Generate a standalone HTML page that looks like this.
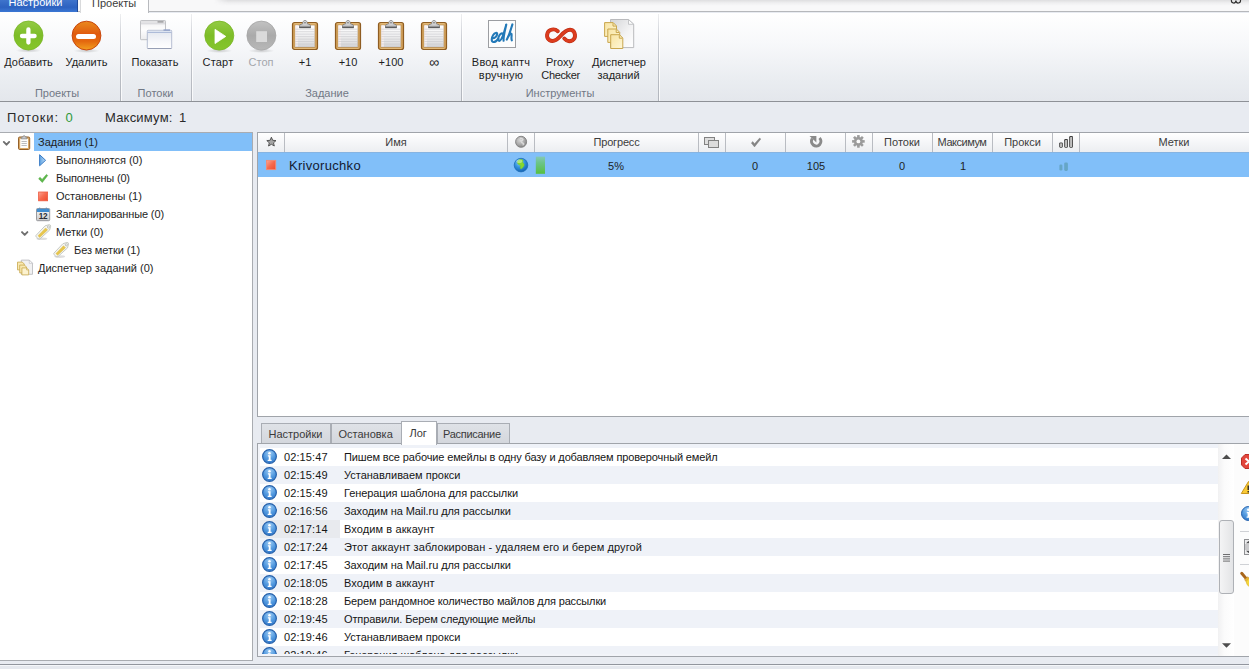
<!DOCTYPE html>
<html lang="ru">
<head>
<meta charset="utf-8">
<title>Проекты</title>
<style>
*{box-sizing:border-box;margin:0;padding:0}
html,body{width:1249px;height:669px;overflow:hidden}
body{position:relative;background:#e8ebf1;font-family:"Liberation Sans",sans-serif;font-size:11px;color:#161616;line-height:1}
.abs{position:absolute}
.t{position:absolute;white-space:nowrap;line-height:14px;height:14px}
.c{text-align:center}
svg{position:absolute;overflow:visible}
/* top strip */
#topstrip{left:0;top:0;width:1249px;height:12px;background:#f8f8f9;border-bottom:1px solid #b6b8bc}
#topshadow{left:214px;top:0;width:1035px;height:6px;background:linear-gradient(rgba(120,120,125,.20),rgba(150,150,155,.08) 50%,rgba(200,200,200,0));-webkit-mask-image:linear-gradient(90deg,transparent,#000 14px);mask-image:linear-gradient(90deg,transparent,#000 14px)}
#tab1{left:0;top:0;width:78px;height:12px;background:linear-gradient(#3f74cc,#2d62c0 60%,#3b77d4);border-right:1px solid #1f4a9a}
#tab2{left:80px;top:0;width:69px;height:13px;background:#fff;border-left:1px solid #d9dadc;border-right:1px solid #b8babe}
/* ribbon */
#ribbon{left:0;top:13px;width:1249px;height:89px;background:linear-gradient(#ffffff 0%,#f7f8fa 35%,#eaedf1 75%,#e4e7ec 100%);border-bottom:1px solid #8e9197}
.gsep{position:absolute;top:14px;width:1px;height:87px;background:linear-gradient(rgba(200,203,209,0.3),#c9ccd2 30%,#b1b5bc);box-shadow:1px 0 0 rgba(255,255,255,.75)}
/* status */
#status{left:0;top:102px;width:1249px;height:30px;background:#e8ebf1}
.st{font-size:13px;line-height:16px;height:16px;color:#2a2a2a}
/* left panel */
#left{left:0;top:132px;width:253px;height:529px;background:#fff;border-top:1px solid #a9acb1;border-right:1px solid #a9acb1;border-bottom:1px solid #a9acb1}
#sel{left:34px;top:133px;width:218px;height:18px;background:#81bff9}
/* table */
#table{left:257px;top:132px;width:992px;height:285px;background:#fff;border:1px solid #a0a4aa;border-right:none}
#thead{left:258px;top:133px;width:991px;height:19px;background:linear-gradient(#ffffff,#f5f6f8 50%,#eceef1)}
.csep{position:absolute;top:133px;width:1px;height:19px;background:#b9bcc2}
#trow{left:258px;top:152px;width:991px;height:25px;background:#81bff9;border-top:1px solid #86b4e2}
.r13{font-size:13px;line-height:16px;height:16px}
/* tabs */
.tab{position:absolute;top:423px;height:21px;background:linear-gradient(#dfe2e7,#d3d6dc);border:1px solid #a9adb4;border-bottom:none}
.tab.act{top:421px;height:24px;background:#fff;z-index:3}
/* log */
#log{left:257px;top:443px;width:992px;height:214px;background:#f2f4f9;border:1px solid #a0a4aa;border-right:none}
#sbar{left:1218px;top:444px;width:16px;height:212px;background:linear-gradient(90deg,#f1f1f2,#fbfbfb 40%,#ffffff)}
#thumb{left:1219px;top:520px;width:15px;height:74px;border:1px solid #aeb1b6;border-radius:3px;background:linear-gradient(90deg,#f4f4f5,#e3e4e6)}
#rtool{left:1234px;top:444px;width:15px;height:212px;background:#fcfcfc}
#bottomline{left:0;top:664px;width:1249px;height:1px;background:#92969e}
#bottombar{left:0;top:665px;width:1249px;height:4px;background:#e5e8ee;border-top:1px solid #f5f7fa}
</style>
</head>
<body>
<svg width="0" height="0" style="position:absolute"><defs>
<radialGradient id="gInfo" cx="50%" cy="25%" r="80%"><stop offset="0" stop-color="#9ccaf3"/><stop offset="0.55" stop-color="#5199df"/><stop offset="1" stop-color="#2f74c6"/></radialGradient>
<g id="info"><circle cx="7" cy="7" r="6.400" fill="url(#gInfo)" stroke="#2460ab" stroke-width="1.100"/><circle cx="7" cy="3.900" r="1.150" fill="#fff"/><path d="M5.500 5.900h2.500v4.100h1v1.100H5.300v-1.100h1v-3H5.500z" fill="#fff"/></g>
</defs></svg>
<!-- TOP STRIP -->
<div class="abs" id="topstrip"></div>
<div class="abs" id="topshadow"></div>
<div class="abs" style="left:0;top:12px;width:81px;height:1px;background:#fdfdfe"></div>
<div class="abs" id="tab1"></div>
<div class="abs" id="tab2"></div>
<div class="t" style="left:8.500px;top:-5px;color:#fff;width:54px">Настройки</div>
<div class="t" style="left:92px;top:-4px;color:#3c3c3c">Проекты</div>

<svg style="left:1229px;top:0" width="14" height="5" viewBox="0 0 14 5"><path d="M2.300 0 C2.300 4 6.600 4 6.900 0.600 C7.300 4 11.600 4 11.600 0" fill="none" stroke="#2d2d2d" stroke-width="1.100"/></svg>
<!-- RIBBON -->
<div class="abs" id="ribbon"></div>
<div class="gsep" style="left:120px"></div>
<div class="gsep" style="left:191px"></div>
<div class="gsep" style="left:461px"></div>
<div class="gsep" style="left:658px"></div>
<svg id="ribicons" style="left:0;top:0" width="1249" height="110" viewBox="0 0 1249 110">
<defs>
<linearGradient id="gGreen" x1="0" y1="0" x2="0" y2="1"><stop offset="0" stop-color="#93cb45"/><stop offset="0.5" stop-color="#7dbd27"/><stop offset="1" stop-color="#86c62c"/></linearGradient>
<linearGradient id="gRed" x1="0" y1="0" x2="0" y2="1"><stop offset="0" stop-color="#ea8a1e"/><stop offset="0.45" stop-color="#e05a0e"/><stop offset="0.7" stop-color="#e4680f"/><stop offset="1" stop-color="#f3a11f"/></linearGradient>
<linearGradient id="gGray" x1="0" y1="0" x2="0" y2="1"><stop offset="0" stop-color="#c2c2c2"/><stop offset="0.5" stop-color="#aaaaaa"/><stop offset="1" stop-color="#b8b8b8"/></linearGradient>
<radialGradient id="gShadow" cx="50%" cy="50%" r="50%"><stop offset="0" stop-color="#000" stop-opacity="0.18"/><stop offset="1" stop-color="#000" stop-opacity="0"/></radialGradient>
<linearGradient id="gPaper" x1="0" y1="0" x2="0" y2="1"><stop offset="0" stop-color="#ffffff"/><stop offset="0.4" stop-color="#f3f3f4"/><stop offset="1" stop-color="#d6d6d8"/></linearGradient>
<linearGradient id="gBoard" x1="0" y1="0" x2="1" y2="0"><stop offset="0" stop-color="#c8934a"/><stop offset="0.12" stop-color="#e2b876"/><stop offset="0.88" stop-color="#e2b876"/><stop offset="1" stop-color="#c8934a"/></linearGradient>
<linearGradient id="gClip" x1="0" y1="0" x2="0" y2="1"><stop offset="0" stop-color="#ececec"/><stop offset="1" stop-color="#b4b4b6"/></linearGradient>
<linearGradient id="gWinB" x1="0" y1="0" x2="0" y2="1"><stop offset="0" stop-color="#f1f1f2"/><stop offset="0.5" stop-color="#fdfdfd"/><stop offset="1" stop-color="#ececee"/></linearGradient>
<linearGradient id="gWinF" x1="0" y1="0" x2="0" y2="1"><stop offset="0" stop-color="#e2e6ee"/><stop offset="0.6" stop-color="#f6f7fa"/><stop offset="1" stop-color="#ffffff"/></linearGradient>
<linearGradient id="gDocG" x1="0" y1="0" x2="1" y2="1"><stop offset="0" stop-color="#d4d5d7"/><stop offset="0.6" stop-color="#f4f4f5"/><stop offset="1" stop-color="#ffffff"/></linearGradient>
<linearGradient id="gDocY" x1="0" y1="0" x2="1" y2="1"><stop offset="0" stop-color="#f8e4a4"/><stop offset="0.5" stop-color="#fbedbb"/><stop offset="1" stop-color="#fef7d8"/></linearGradient>
<g id="clipb">
 <rect x="0.5" y="2.5" width="25" height="27" rx="2" fill="url(#gBoard)" stroke="#8f5d22" stroke-width="1.2"/>
 <rect x="3" y="5" width="20" height="22.3" fill="url(#gPaper)" stroke="#a87a3c" stroke-width="0.6"/>
 <rect x="3.3" y="5.3" width="2.6" height="21.7" fill="#f7eeee" opacity="0.9"/>
 <path d="M3.300 9.200h19.400M3.300 11.700h19.400M3.300 14.100h19.400M3.300 16.600h19.400M3.300 19.100h19.400M3.300 21.500h19.400M3.300 24.000h19.400M3.300 26.300h19.400" stroke="#c4c4c8" stroke-width="0.550" fill="none"/>
 <path d="M7.5 7.6 L7.500 5.8 Q7.6 4.6 9 4.300 L10.600 3.800 Q10.800 0.400 13 0.300 Q15.200 0.400 15.400 3.800 L17 4.300 Q18.400 4.600 18.500 5.800 L18.500 7.600 Z" fill="url(#gClip)" stroke="#6e6e70" stroke-width="0.7"/>
 <rect x="7.300" y="6.600" width="11.400" height="1.500" fill="#5c5c5e"/>
 <ellipse cx="13" cy="2.700" rx="1.600" ry="1.200" fill="#8a8a8c" stroke="#f4f4f4" stroke-width="0.500"/>
</g>
</defs>
<!-- add -->
<ellipse cx="28.5" cy="50.5" rx="13" ry="2.2" fill="url(#gShadow)"/>
<circle cx="28.5" cy="35.5" r="14.5" fill="url(#gGreen)" stroke="#78b526" stroke-width="0.8"/>
<path d="M22 36h12.600M28.400 29.500v13.100" stroke="#fff" stroke-width="4.300" stroke-linecap="round"/>
<!-- delete -->
<ellipse cx="86.5" cy="50.8" rx="13" ry="2.2" fill="url(#gShadow)"/>
<circle cx="86.500" cy="35.600" r="14.400" fill="url(#gRed)" stroke="#c9470e" stroke-width="1"/>
<path d="M78.500 36.600h15" stroke="#fff" stroke-width="5" stroke-linecap="round"/>
<!-- show windows -->
<rect x="140.500" y="20.500" width="25" height="19.200" rx="0.800" fill="url(#gWinB)" stroke="#b3b4b8" stroke-width="0.800"/>
<rect x="141" y="21" width="24" height="2.600" fill="#e3e3e5"/>
<path d="M141 23.900h24" stroke="#c6c6c9" stroke-width="0.600"/>
<rect x="157.500" y="21.300" width="6" height="1.200" fill="#8f8f92"/>
<rect x="147.300" y="30.300" width="24.400" height="18.200" rx="0.800" fill="url(#gWinF)" stroke="#a5aec6" stroke-width="0.800"/>
<rect x="147.700" y="30.700" width="23.600" height="1.500" fill="#dde4f1"/>
<path d="M147.700 32.500h23.600" stroke="#9fb0d3" stroke-width="0.800"/>
<path d="M147.600 48.500h23.800" stroke="#8f97ad" stroke-width="0.800"/>
<rect x="163.500" y="29.400" width="6.500" height="1.400" fill="#8fa0c8"/>
<!-- start -->
<ellipse cx="219.300" cy="50.800" rx="13" ry="2.200" fill="url(#gShadow)"/>
<circle cx="219.300" cy="35.600" r="14.500" fill="url(#gGreen)" stroke="#78b526" stroke-width="0.800"/>
<path d="M215 29.300 L225.800 36.400 L215 43.600 Z" fill="#fff" stroke="#fff" stroke-width="0.800" stroke-linejoin="round"/>
<!-- stop -->
<ellipse cx="261.400" cy="50.800" rx="13" ry="2.200" fill="url(#gShadow)"/>
<circle cx="261.400" cy="35.600" r="14.500" fill="url(#gGray)" stroke="#a6a6a6" stroke-width="0.800"/>
<rect x="256.200" y="31.200" width="10.800" height="10.800" fill="#dadada"/>
<!-- clipboards -->
<use href="#clipb" x="292" y="20"/>
<use href="#clipb" x="335" y="20"/>
<use href="#clipb" x="378" y="20"/>
<use href="#clipb" x="421" y="20"/>
<!-- captcha -->
<rect x="488.500" y="20.500" width="27" height="27" fill="#fdfdfd" stroke="#9c9ea2" stroke-width="1"/>
<g fill="none" stroke="#2379b8" stroke-width="2.100" stroke-linecap="round" stroke-linejoin="round">
<path d="M492.600 38.200 C494.500 38.400 497.300 36 497.200 33.800 C497.100 32.300 494.800 32.600 493.200 35 C491.500 37.600 491 41.600 493.200 42 C495 42.300 497 40.500 498.300 38.600"/>
<path d="M503 34 C501.800 32.600 499.600 34.200 498.600 37 C497.800 39.400 498.400 41.200 499.800 40.800 C501.600 40.200 503.400 35.500 506.300 24.600 C504.800 31 503.200 37 503.600 40.800"/>
<path d="M512.400 24.400 C510.800 30 508.600 36 506.800 39.600 C508.600 35.200 510.400 33 511.400 33.800 C512.200 34.600 510.800 38 511.800 40.400"/>
</g>
<!-- proxy infinity -->
<path d="M557.800 31.200 C556 29.600 553 29 550.500 30 C546.300 31.700 545.900 38.200 549.600 40.200 C553.200 42.100 557 40 560.500 36 C563.600 32.400 567 28.900 571.200 29.900 C575.700 31.100 576.200 38.200 572.600 40.200 C569.400 42 566.200 40.800 564.300 38.600" fill="none" stroke="#bb2e15" stroke-width="3.900" stroke-linecap="round" stroke-linejoin="round"/>
<path d="M557.800 31.200 C556 29.600 553 29 550.500 30 C546.300 31.700 545.900 38.200 549.600 40.200 C553.200 42.100 557 40 560.500 36 C563.600 32.400 567 28.900 571.200 29.900 C575.700 31.100 576.200 38.200 572.600 40.200 C569.400 42 566.200 40.800 564.300 38.600" fill="none" stroke="#dc3c1e" stroke-width="2.700" stroke-linecap="round" stroke-linejoin="round"/>
<!-- dispatcher docs -->
<path d="M610.500 19.500 h18 l5.200 4.800 v23.300 h-23.200 z" fill="url(#gDocG)" stroke="#b9babd" stroke-width="1"/>
<path d="M628.500 19.500 v4.800 h5.200 z" fill="#fdfdfd" stroke="#b9babd" stroke-width="0.800" stroke-linejoin="round"/>
<g stroke="#c6a247" stroke-width="0.950" stroke-linejoin="round">
<path d="M604.600 22.600 h8.600 l3.300 3.300 v10.500 h-11.900 z" fill="url(#gDocY)"/>
<path d="M613 23.200 v2.900 h2.900" fill="none"/>
<path d="M607.800 29 h8.600 l3.300 3.300 v10.100 h-11.900 z" fill="url(#gDocY)"/>
<path d="M616.200 29.600 v2.900 h2.900" fill="none"/>
<path d="M610.700 34.700 h8.800 l3.300 3.300 v10.500 h-12.100 z" fill="url(#gDocY)"/>
<path d="M619.300 35.300 v2.900 h2.900" fill="none"/>
</g>
</svg>
<!--RIBBON-ICONS-->
<div class="t c" style="left:-16.5px;top:55px;width:90px;color:#1e1e1e;">Добавить</div>
<div class="t c" style="left:41.5px;top:55px;width:90px;color:#1e1e1e;">Удалить</div>
<div class="t c" style="left:110px;top:55px;width:90px;color:#1e1e1e;">Показать</div>
<div class="t c" style="left:173px;top:55px;width:90px;color:#1e1e1e;letter-spacing:0.2px">Старт</div>
<div class="t c" style="left:216px;top:55px;width:90px;color:#a3a6ab;">Стоп</div>
<div class="t c" style="left:260px;top:55px;width:90px;color:#1e1e1e;">+1</div>
<div class="t c" style="left:303px;top:55px;width:90px;color:#1e1e1e;">+10</div>
<div class="t c" style="left:346px;top:55px;width:90px;color:#1e1e1e;">+100</div>
<div class="t c" style="left:389px;top:55px;width:90px;color:#1e1e1e;font-size:14px">∞</div>
<div class="t c" style="left:456px;top:54.7px;width:90px;color:#1e1e1e;letter-spacing:0.2px">Ввод каптч</div>
<div class="t c" style="left:456px;top:67.7px;width:90px;color:#1e1e1e;letter-spacing:0.2px">вручную</div>
<div class="t c" style="left:515px;top:54.7px;width:90px;color:#1e1e1e;">Proxy</div>
<div class="t c" style="left:515.5px;top:67.7px;width:90px;color:#1e1e1e;letter-spacing:-0.37px">Checker</div>
<div class="t c" style="left:574px;top:54.7px;width:90px;color:#1e1e1e;">Диспетчер</div>
<div class="t c" style="left:573.5px;top:67.7px;width:90px;color:#1e1e1e;">заданий</div>
<div class="t c" style="left:12px;top:86px;width:90px;color:#717885;">Проекты</div>
<div class="t c" style="left:110.5px;top:86px;width:90px;color:#717885;">Потоки</div>
<div class="t c" style="left:282px;top:86px;width:90px;color:#717885;">Задание</div>
<div class="t c" style="left:515px;top:86px;width:90px;color:#717885;">Инструменты</div>


<!-- STATUS -->
<div class="abs" id="status"></div>
<div class="t st" style="left:7px;top:110px;letter-spacing:.85px">Потоки:</div>
<div class="t st" style="left:65.500px;top:110px;color:#2e9a3a">0</div>
<div class="t st" style="left:105px;top:110px;letter-spacing:.2px">Максимум:</div>
<div class="t st" style="left:179px;top:110px">1</div>


<!-- LEFT -->
<div class="abs" id="left"></div>
<div class="abs" id="sel"></div>
<div class="t" style="left:38px;top:135px;color:#1e1e1e;">Задания (1)</div>
<div class="t" style="left:56px;top:153px;color:#1e1e1e;">Выполняются (0)</div>
<div class="t" style="left:56px;top:171px;color:#1e1e1e;letter-spacing:-0.18px">Выполнены (0)</div>
<div class="t" style="left:56px;top:189px;color:#1e1e1e;">Остановлены (1)</div>
<div class="t" style="left:56px;top:207px;color:#1e1e1e;letter-spacing:-.12px">Запланированные (0)</div>
<div class="t" style="left:56px;top:225px;color:#1e1e1e;">Метки (0)</div>
<div class="t" style="left:74px;top:243px;color:#1e1e1e;letter-spacing:-0.08px">Без метки (1)</div>
<div class="t" style="left:38px;top:261px;color:#1e1e1e;">Диспетчер заданий (0)</div>
<svg id="mainicons" style="left:0;top:0;z-index:5" width="1249" height="669" viewBox="0 0 1249 669">
<defs>
<linearGradient id="gSq" x1="0" y1="0" x2="1" y2="1"><stop offset="0" stop-color="#fca593"/><stop offset="0.5" stop-color="#f66a4e"/><stop offset="1" stop-color="#ef4c2e"/></linearGradient>
<linearGradient id="gPlay" x1="0" y1="0" x2="1" y2="0"><stop offset="0" stop-color="#5fa3e2"/><stop offset="1" stop-color="#b9d8f5"/></linearGradient>
<linearGradient id="gCal" x1="0" y1="0" x2="0" y2="1"><stop offset="0" stop-color="#fafafa"/><stop offset="1" stop-color="#c9cacc"/></linearGradient>
<linearGradient id="gTag" x1="0" y1="0" x2="1" y2="1"><stop offset="0" stop-color="#ffffff"/><stop offset="1" stop-color="#e9ebe6"/></linearGradient>
<linearGradient id="gBar" x1="0" y1="0" x2="0" y2="1"><stop offset="0" stop-color="#84c9b4"/><stop offset="0.35" stop-color="#6cc48a"/><stop offset="1" stop-color="#57c03f"/></linearGradient>
<radialGradient id="gGlobeG" cx="40%" cy="35%" r="65%"><stop offset="0" stop-color="#d6d6d6"/><stop offset="0.6" stop-color="#ababab"/><stop offset="1" stop-color="#858585"/></radialGradient>
<radialGradient id="gGlobe" cx="40%" cy="30%" r="70%"><stop offset="0" stop-color="#8fd0f8"/><stop offset="0.55" stop-color="#2f8fdc"/><stop offset="1" stop-color="#1565b5"/></radialGradient>
<linearGradient id="gSig" x1="0" y1="0" x2="1" y2="0"><stop offset="0" stop-color="#a0a0a0"/><stop offset="0.5" stop-color="#cfcfcf"/><stop offset="1" stop-color="#a8a8a8"/></linearGradient>
<g id="chev"><path d="M0.800 0.900 L3.500 3.700 L6.200 0.900" fill="none" stroke="#6f6f6f" stroke-width="1.900" stroke-linecap="round" stroke-linejoin="round"/></g>
<g id="tag">
 <ellipse cx="6.500" cy="14.600" rx="5.500" ry="1.300" fill="#000" opacity="0.130"/>
 <path d="M0.700 11.200 L9.700 1.700 L13.600 0.500 Q15.400 0.300 15.300 2.100 L14.300 5.900 L4.700 14.600 Q3.700 15.200 2.700 14.400 L0.900 12.700 Q0.200 11.900 0.700 11.200 Z" fill="url(#gTag)" stroke="#b9bdb4" stroke-width="0.800"/>
 <path d="M2.700 11.600 L10.300 3.700 L12.300 5.700 L4.400 13.200 Z" fill="#e7c64d" stroke="#d8b53a" stroke-width="0.400"/>
 <circle cx="13.100" cy="2.800" r="1.050" fill="#fff" stroke="#9da19a" stroke-width="0.600"/>
</g>
<g id="sdocs">
 <path d="M4.300 0.500 h8 l3.200 3.200 v11 h-11.200 z" fill="#f1f1f2" stroke="#b5b6ba" stroke-width="0.800"/>
 <path d="M12.300 0.500 v3.200 h3.200 z" fill="#fff" stroke="#b5b6ba" stroke-width="0.600"/>
 <g stroke="#c8a84e" stroke-width="0.800" fill="#f9e9b2">
 <path d="M0.500 2.500 h4.800 l2 2 v5.800 h-6.800 z"/>
 <path d="M2.700 5.500 h4.800 l2 2 v5.800 h-6.800 z"/>
 <path d="M4.900 8.300 h4.800 l2 2 v5 h-6.800 z" fill="#fcf2cf"/>
 <path d="M9.700 8.300 v2 h2" fill="#fdf7e0"/>
 </g>
</g>
</defs>
<!-- TREE ICONS -->
<use href="#chev" x="3" y="141"/>
<use href="#chev" x="21.200" y="231.200"/>
<!-- small clipboard -->
<rect x="18.500" y="137" width="11.200" height="12.500" rx="1.200" fill="#d9a968" stroke="#94602a" stroke-width="1"/>
<rect x="20.200" y="138.800" width="7.800" height="9.200" fill="#fdfdfd"/>
<path d="M21.500 141.500h5.300M21.500 143.500h5.300M21.500 145.500h5.300" stroke="#a9abae" stroke-width="0.800"/>
<path d="M21.300 138.900 v-1.800 h1.600 q0.200 -1.600 1.200 -1.600 q1 0 1.200 1.600 h1.600 v1.800 z" fill="#c9c9cb" stroke="#77787b" stroke-width="0.600"/>
<!-- play -->
<path d="M39.600 154.700 L45.600 160.300 L39.600 165.800 Z" fill="url(#gPlay)" stroke="#3a7cc6" stroke-width="1" stroke-linejoin="round"/>
<!-- check -->
<path d="M38.600 178.700 L40.100 177.300 L42.100 179.400 L46.500 174.400 L47.700 175.500 L42.300 182.500 Z" fill="#5cb84a" stroke="#4aa53a" stroke-width="0.500" stroke-linejoin="round"/>
<!-- stopped square -->
<rect x="38.600" y="192" width="9" height="8.800" fill="url(#gSq)" stroke="#ee5a40" stroke-width="0.800"/>
<!-- calendar -->
<rect x="36.500" y="208.500" width="13.200" height="12.200" rx="1" fill="url(#gCal)" stroke="#8e9094" stroke-width="0.900"/>
<rect x="36.900" y="208.800" width="12.400" height="3.200" fill="#3f8dd0"/>
<path d="M39.700 207.600v2.200M46.300 207.600v2.200" stroke="#5f90c0" stroke-width="1"/>
<text x="43.100" y="219" font-family="Liberation Sans, sans-serif" font-size="8.200" font-weight="bold" fill="#2b2f36" text-anchor="middle" letter-spacing="-0.3">12</text>
<!-- tags -->
<use href="#tag" x="35.300" y="224.200"/>
<use href="#tag" x="53.200" y="242"/>
<!-- docs -->
<use href="#sdocs" x="17" y="259.600"/>

<!-- TABLE HEADER ICONS -->
<!-- star -->
<path d="M271.400 137.200 L272.700 140.300 L276 140.600 L273.500 142.800 L274.300 146 L271.400 144.300 L268.500 146 L269.300 142.800 L266.800 140.600 L270.100 140.300 Z" fill="#a5a5a5" stroke="#4a4a4a" stroke-width="0.900" stroke-linejoin="round"/>
<!-- grey globe -->
<circle cx="521.100" cy="141.800" r="5.500" fill="url(#gGlobeG)" stroke="#868686" stroke-width="1"/>
<path d="M520 138.500 q2 -0.500 3 1 q-0.500 1.500 -2 1.500 q0.500 2 2.500 2.500 q1 1 -1 1.500" fill="none" stroke="#e4e4e4" stroke-width="1.300" opacity="0.800"/>
<!-- windows -->
<rect x="704.500" y="137.500" width="10" height="7" fill="#dedede" stroke="#828282" stroke-width="1"/>
<rect x="708.500" y="140.500" width="10" height="7" fill="#dcdcdc" stroke="#828282" stroke-width="1"/>
<!-- check gray -->
<path d="M751.300 143 L752.800 141.600 L754.500 143.700 L759.700 138 L760.800 139 L754.500 146.900 Z" fill="#858585" stroke="#7a7a7a" stroke-width="0.400" stroke-linejoin="round"/>
<!-- refresh -->
<path d="M819.500 138 A4.700 4.700 0 1 1 812.300 138.700" fill="none" stroke="#8a8a8a" stroke-width="3"/>
<path d="M809.500 136 H816.400 V142.600 Z" fill="#8a8a8a"/>
<!-- gear -->
<g transform="translate(858.400 141.400)" fill="#9b9b9b">
 <circle r="4.500"/>
 <g id="teeth"><rect x="-1.300" y="-6.300" width="2.600" height="12.600"/><rect x="-6.300" y="-1.300" width="12.600" height="2.600"/></g>
 <use href="#teeth" transform="rotate(45)"/>
 <circle r="1.900" fill="#fafafa"/>
</g>
<!-- signal -->
<rect x="1059.200" y="142.400" width="3.600" height="5.300" rx="1.100" fill="#3f3f3f"/>
<rect x="1064.200" y="139.100" width="3.800" height="8.600" rx="1.100" fill="#3f3f3f"/>
<rect x="1069.200" y="136.100" width="3.800" height="11.600" rx="1.100" fill="#3f3f3f"/>
<rect x="1060" y="143.200" width="2" height="3.700" rx="0.500" fill="url(#gSig)"/>
<rect x="1065" y="139.900" width="2.200" height="7" rx="0.500" fill="url(#gSig)"/>
<rect x="1070" y="136.900" width="2.200" height="10" rx="0.500" fill="url(#gSig)"/>
<!-- TABLE ROW ICONS -->
<rect x="266.500" y="160.400" width="9.200" height="9.200" fill="url(#gSq)" stroke="#f48a74" stroke-width="0.900"/>
<circle cx="521" cy="165.100" r="6.800" fill="url(#gGlobe)" stroke="#1f6fb8" stroke-width="0.800"/>
<path d="M519.200 159.600 q2.800 -0.800 4 0.800 q-1 1.200 -0.200 2.600 q1.600 0.400 1.200 2.200 q-0.600 2.600 -3 3.800 q-1.600 -0.400 -1 -2 q0.800 -1.200 -0.600 -2 q-2 -0.600 -2.400 -2.600 q0.400 -2 2 -2.800 z" fill="#86d82e" stroke="#6ac030" stroke-width="0.400"/>
<ellipse cx="519.300" cy="161.300" rx="3" ry="1.800" fill="#fff" opacity="0.350"/>
<rect x="535.800" y="156.600" width="9.200" height="17.200" fill="url(#gBar)"/>
<rect x="1059.400" y="164.500" width="3" height="6" rx="1.200" fill="#66a6c6"/>
<rect x="1064.200" y="162.400" width="3.700" height="8.500" rx="1.300" fill="#66a6c6"/>
</svg>
<!--TREE-ICONS-->


<!-- TABLE -->
<div class="abs" id="table"></div>
<div class="abs" id="thead"></div>
<div class="abs" id="trow"></div>
<div class="csep" style="left:284px"></div>
<div class="csep" style="left:507px"></div>
<div class="csep" style="left:534px"></div>
<div class="csep" style="left:698px"></div>
<div class="csep" style="left:725px"></div>
<div class="csep" style="left:785px"></div>
<div class="csep" style="left:845px"></div>
<div class="csep" style="left:872px"></div>
<div class="csep" style="left:932px"></div>
<div class="csep" style="left:992px"></div>
<div class="csep" style="left:1052px"></div>
<div class="csep" style="left:1079px"></div>
<div class="t c" style="left:351px;top:135px;width:90px;color:#3c3c3c;">Имя</div>
<div class="t c" style="left:571.5px;top:135px;width:90px;color:#3c3c3c;letter-spacing:-0.17px">Прогресс</div>
<div class="t c" style="left:857px;top:135px;width:90px;color:#3c3c3c;">Потоки</div>
<div class="t c" style="left:917px;top:135px;width:90px;color:#3c3c3c;letter-spacing:-0.47px">Максимум</div>
<div class="t c" style="left:977.5px;top:135px;width:90px;color:#3c3c3c;">Прокси</div>
<div class="t c" style="left:1129px;top:135px;width:90px;color:#3c3c3c;">Метки</div>
<div class="t r13" style="left:289px;top:157.500px;letter-spacing:.3px;color:#141a30">Krivoruchko</div>
<div class="t c" style="left:571px;top:158.5px;width:90px;color:#1e1e1e;">5%</div>
<div class="t c" style="left:710px;top:158.5px;width:90px;color:#1e1e1e;">0</div>
<div class="t c" style="left:771px;top:158.5px;width:90px;color:#1e1e1e;">105</div>
<div class="t c" style="left:857px;top:158.5px;width:90px;color:#1e1e1e;">0</div>
<div class="t c" style="left:918px;top:158.5px;width:90px;color:#1e1e1e;">1</div>
<!--TABLE-ICONS-->


<!-- TABS -->
<div class="tab" style="left:261px;width:70px"></div>
<div class="tab" style="left:331px;width:71px"></div>
<div class="tab" style="left:437px;width:73px"></div>
<div class="tab act" style="left:401px;width:36px"></div>
<div class="t" style="left:268.5px;top:426.8px;color:#3a3a3a;z-index:4">Настройки</div>
<div class="t" style="left:338.5px;top:426.8px;color:#3a3a3a;z-index:4">Остановка</div>
<div class="t" style="left:409.5px;top:426px;color:#3a3a3a;z-index:4">Лог</div>
<div class="t" style="left:443px;top:426.8px;color:#3a3a3a;z-index:4;letter-spacing:-0.29px">Расписание</div>


<!-- LOG -->
<div class="abs" id="log"></div>
<div class="abs" id="logclip" style="left:260px;top:444px;width:958px;height:210px;overflow:hidden;background:#fff">
<div class="abs" style="left:0;top:-14px;width:958px;height:18px;background:#eff2f8"></div>
<svg class="info" style="left:2px;top:5px" width="15" height="15" viewBox="0 0 14 14"><use href="#info"/></svg><div class="t" style="left:24px;top:6px;letter-spacing:.1px">02:15:47</div><div class="t" style="left:84px;top:6px;letter-spacing:-0.128px">Пишем все рабочие емейлы в одну базу и добавляем проверочный емейл</div>
<div class="abs" style="left:0;top:22px;width:958px;height:18px;background:#eff2f8"></div>
<svg class="info" style="left:2px;top:23px" width="15" height="15" viewBox="0 0 14 14"><use href="#info"/></svg><div class="t" style="left:24px;top:24px;letter-spacing:.1px">02:15:49</div><div class="t" style="left:84px;top:24px;letter-spacing:0.0px">Устанавливаем прокси</div>
<svg class="info" style="left:2px;top:41px" width="15" height="15" viewBox="0 0 14 14"><use href="#info"/></svg><div class="t" style="left:24px;top:42px;letter-spacing:.1px">02:15:49</div><div class="t" style="left:84px;top:42px;letter-spacing:-0.075px">Генерация шаблона для рассылки</div>
<div class="abs" style="left:0;top:58px;width:958px;height:18px;background:#eff2f8"></div>
<svg class="info" style="left:2px;top:59px" width="15" height="15" viewBox="0 0 14 14"><use href="#info"/></svg><div class="t" style="left:24px;top:60px;letter-spacing:.1px">02:16:56</div><div class="t" style="left:84px;top:60px;letter-spacing:-0.07px">Заходим на Mail.ru для рассылки</div>
<div class="abs" style="left:0;top:76px;width:80px;height:18px;background:#e8eaee"></div>
<svg class="info" style="left:2px;top:77px" width="15" height="15" viewBox="0 0 14 14"><use href="#info"/></svg><div class="t" style="left:24px;top:78px;letter-spacing:.1px">02:17:14</div><div class="t" style="left:84px;top:78px;letter-spacing:0.1px">Входим в аккаунт</div>
<div class="abs" style="left:0;top:94px;width:958px;height:18px;background:#eff2f8"></div>
<svg class="info" style="left:2px;top:95px" width="15" height="15" viewBox="0 0 14 14"><use href="#info"/></svg><div class="t" style="left:24px;top:96px;letter-spacing:.1px">02:17:24</div><div class="t" style="left:84px;top:96px;letter-spacing:0.09px">Этот аккаунт заблокирован - удаляем его и берем другой</div>
<svg class="info" style="left:2px;top:113px" width="15" height="15" viewBox="0 0 14 14"><use href="#info"/></svg><div class="t" style="left:24px;top:114px;letter-spacing:.1px">02:17:45</div><div class="t" style="left:84px;top:114px;letter-spacing:-0.07px">Заходим на Mail.ru для рассылки</div>
<div class="abs" style="left:0;top:130px;width:958px;height:18px;background:#eff2f8"></div>
<svg class="info" style="left:2px;top:131px" width="15" height="15" viewBox="0 0 14 14"><use href="#info"/></svg><div class="t" style="left:24px;top:132px;letter-spacing:.1px">02:18:05</div><div class="t" style="left:84px;top:132px;letter-spacing:0.1px">Входим в аккаунт</div>
<svg class="info" style="left:2px;top:149px" width="15" height="15" viewBox="0 0 14 14"><use href="#info"/></svg><div class="t" style="left:24px;top:150px;letter-spacing:.1px">02:18:28</div><div class="t" style="left:84px;top:150px;letter-spacing:-0.137px">Берем рандомное количество майлов для рассылки</div>
<div class="abs" style="left:0;top:166px;width:958px;height:18px;background:#eff2f8"></div>
<svg class="info" style="left:2px;top:167px" width="15" height="15" viewBox="0 0 14 14"><use href="#info"/></svg><div class="t" style="left:24px;top:168px;letter-spacing:.1px">02:19:45</div><div class="t" style="left:84px;top:168px;letter-spacing:-0.12px">Отправили. Берем следующие мейлы</div>
<svg class="info" style="left:2px;top:185px" width="15" height="15" viewBox="0 0 14 14"><use href="#info"/></svg><div class="t" style="left:24px;top:186px;letter-spacing:.1px">02:19:46</div><div class="t" style="left:84px;top:186px;letter-spacing:0.0px">Устанавливаем прокси</div>
<div class="abs" style="left:0;top:202px;width:958px;height:18px;background:#eff2f8"></div>
<svg class="info" style="left:2px;top:203px" width="15" height="15" viewBox="0 0 14 14"><use href="#info"/></svg><div class="t" style="left:24px;top:204px;letter-spacing:.1px">02:19:46</div><div class="t" style="left:84px;top:204px;letter-spacing:-0.075px">Генерация шаблона для рассылки</div>
</div>
<div class="abs" id="sbar"></div>
<div class="abs" id="thumb"></div>
<div class="abs" id="rtool"></div>
<svg id="logicons" style="left:0;top:0;z-index:6" width="1249" height="669" viewBox="0 0 1249 669">
<!-- scrollbar arrows -->
<path d="M1222 459 L1226.500 454.500 L1231 459 Z" fill="#4d4d4d"/>
<path d="M1222 643.300 L1231 643.300 L1226.500 647.800 Z" fill="#4d4d4d"/>
<!-- grip -->
<path d="M1223 554.500h7M1223 556.700h7M1223 558.900h7M1223 561.100h7" stroke="#6e6e70" stroke-width="1"/>
<!-- error octagon -->
<path d="M1245 454.500 L1252 454.500 L1256 458.500 L1256 464.500 L1252 468.500 L1245 468.500 L1241.500 464.900 L1241.500 458.100 Z" fill="#e2463c" stroke="#b92f27" stroke-width="1"/>
<path d="M1245.500 458.400 L1249 461.500 L1245.500 464.600" fill="none" stroke="#fff" stroke-width="2"/>
<!-- warning -->
<path d="M1248.500 481.500 L1241.300 493.500 L1256 493.500 Z" fill="#f9ca34" stroke="#c9951c" stroke-width="1" stroke-linejoin="round"/>
<rect x="1247.500" y="485.500" width="2" height="4.500" fill="#3a3326"/>
<rect x="1247.500" y="491" width="2" height="1.500" fill="#3a3326"/>
<!-- info -->
<circle cx="1248.500" cy="513.500" r="7" fill="url(#gInfo)" stroke="#2461ad" stroke-width="1"/>
<path d="M1246.800 512 h2.600 v4.500 h1 v1.200 h-3.800 v-1.200 h1 v-3.300 h-0.800 z" fill="#fff"/>
<circle cx="1248.300" cy="509.800" r="1.200" fill="#fff"/>
<!-- separators -->
<path d="M1240 531.500h9M1240 564.500h9" stroke="#cfd1d5" stroke-width="1"/>
<!-- scroll icon -->
<rect x="1244.500" y="539.500" width="8" height="15" fill="#c9c9cb" stroke="#8e8f92" stroke-width="1"/>
<rect x="1245" y="540" width="7" height="4" fill="#ececed"/>
<rect x="1245" y="550" width="7" height="4" fill="#ececed"/>
<path d="M1246 543.300 l2.500 -2.300 l2.500 2.300 z M1246 550.800 l2.500 2.300 l2.500 -2.300 z" fill="#4e4e50"/>
<!-- brush -->
<path d="M1241.700 573.300 L1246.200 578.600" stroke="#a8651a" stroke-width="3" stroke-linecap="round"/>
<path d="M1244.500 579.800 L1247.600 576.700 L1249.500 578.600 L1246.400 581.700 Z" fill="#e8b23a" stroke="#b9821c" stroke-width="0.500"/>
<path d="M1246 581.500 Q1246.500 586 1251 587.500 L1253 580 L1249.200 578.200 Z" fill="#f6d63c" stroke="#d4ae20" stroke-width="0.600"/>
</svg>
<!--LOG-ICONS-->


<div class="abs" id="bottomline"></div>
<div class="abs" id="bottombar"></div>
</body>
</html>
